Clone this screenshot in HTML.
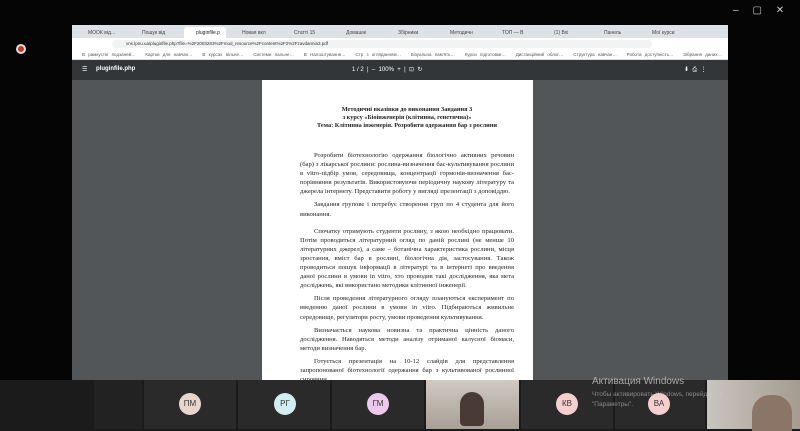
<!DOCTYPE html>
<html><head><meta charset="utf-8"><style>
*{margin:0;padding:0;box-sizing:border-box}
body{width:800px;height:431px;background:#050505;position:relative;overflow:hidden;font-family:"Liberation Sans",sans-serif}
.abs{position:absolute}
.tabs{left:72px;top:25px;width:656px;height:13px;background:#dee1e6}
.tab{position:absolute;top:2px;height:11px;font-size:5px;color:#444;padding:3px 0 0 12px;white-space:nowrap;overflow:hidden}
.addr{left:72px;top:38px;width:656px;height:12px;background:#fff}
.bm{left:72px;top:50px;width:656px;height:10px;background:#fff;border-bottom:1px solid #ddd;font-size:4.5px;color:#555;overflow:hidden}
.tool{left:72px;top:60px;width:656px;height:20px;background:#323639;color:#fff;font-size:6px}
.pdfbg{left:72px;top:80px;width:656px;height:300px;background:#525659}
.page{left:262px;top:80px;width:271px;height:300px;background:#fff;font-family:"Liberation Serif",serif;font-size:6.6px;color:#222;padding:0 19px 0 38px;line-height:9.1px;overflow:hidden}
.page p{text-align:justify;text-indent:14px;margin-bottom:4px}
.h{text-align:center;font-weight:bold;margin:26px 0 21px;line-height:8px;font-size:6.3px}
.strip{left:0;top:380px;width:800px;height:51px;background:#1b1b1b}
.tile{position:absolute;top:380px;height:49px;background:#2a2a2a}
.av{position:absolute;top:393px;width:22px;height:22px;border-radius:50%;font-size:8px;text-align:center;line-height:22px;color:#333}
</style></head><body>
<div class="abs" style="left:16px;top:44px;width:10px;height:10px;border-radius:50%;background:#c0392b;border:2px solid #ddd"></div>
<div class="abs" style="left:733px;top:5px;color:#ccc;font-size:10px;white-space:nowrap;width:70px">–&nbsp;&nbsp;&nbsp;&nbsp;&nbsp;▢&nbsp;&nbsp;&nbsp;&nbsp;&nbsp;✕</div>
<div class="abs tabs">
<div class="tab" style="left:4px;width:50px">МООК від…</div>
<div class="tab" style="left:58px;width:50px">Пошук від</div>
<div class="tab" style="left:112px;width:42px;background:#fff;border-radius:3px 3px 0 0;color:#222">pluginfile.p</div>
<div class="tab" style="left:158px;width:48px">Новая вкл</div>
<div class="tab" style="left:210px;width:48px">Статті 15</div>
<div class="tab" style="left:262px;width:48px">Домашні</div>
<div class="tab" style="left:314px;width:48px">Збірники</div>
<div class="tab" style="left:366px;width:48px">Методичн</div>
<div class="tab" style="left:418px;width:48px">ТОП — В</div>
<div class="tab" style="left:470px;width:48px">(1) Вхі</div>
<div class="tab" style="left:520px;width:48px">Панель</div>
<div class="tab" style="left:568px;width:40px">Мої курси</div>
</div>
<div class="abs addr"><div style="position:absolute;left:40px;top:2px;width:540px;height:8px;background:#f1f3f4;border-radius:4px;font-size:4.5px;color:#333;padding:1px 0 0 14px;white-space:nowrap">vns.lpnu.ua/pluginfile.php?file=%2F2003283%2Fmod_resource%2Fcontent%2F2%2Fzavdannia3.pdf</div></div>
<div class="abs bm"><div style="padding:2px 0 0 10px;white-space:nowrap;word-spacing:2px">В рамкустні подзаней… &nbsp; Картки для навчан… &nbsp; В курсах вільне… &nbsp; Системи пальне… &nbsp; В Налоштування… &nbsp; Стр з огляданням… &nbsp; Візуальна пам'ять… &nbsp; Курси підготовки… &nbsp; Дистанційний облог… &nbsp; Структура навчан… &nbsp; Робота доступність… &nbsp; Зібрання даних…</div></div>
<div class="abs tool"><span style="position:absolute;left:10px;top:6px">☰</span><span style="position:absolute;left:24px;top:6px;font-weight:bold">pluginfile.php</span><span style="position:absolute;left:280px;top:6px;white-space:nowrap">1 / 2 &nbsp;|&nbsp; – &nbsp;100% &nbsp;+ &nbsp;|&nbsp; ⊡ &nbsp;↻</span><span style="position:absolute;left:612px;top:6px;white-space:nowrap">⬇ &nbsp;⎙ &nbsp;⋮</span></div>
<div class="abs pdfbg"></div>
<div class="abs page">
<div class="h">Методичні вказівки до виконання Завдання 3<br>з курсу «Біоінженерія (клітинна, генетична)»<br>Тема: Клітинна інженерія. Розробити одержання бар з рослини</div>
<p>Розробити біотехнологію одержання біологічно активних речовин (бар) з лікарської рослини: рослина-визначення бас-культивування рослини в vitro-підбір умов, середовища, концентрації гормонів-визначення бас-порівняння результатів. Використовуючи періодичну наукову літературу та джерела інтернету. Представити роботу у вигляді презентації з доповіддю.</p>
<p style="margin-bottom:8px">Завдання групове і потребує створення груп по 4 студента для його виконання.</p>
<p>Спочатку отримують студенти рослину, з якою необхідно працювати. Потім проводиться літературний огляд по даній рослині (не менше 10 літературних джерел), а саме – ботанічна характеристика рослини, місця зростання, вміст бар в рослині, біологічна дія, застосування. Також проводиться пошук інформації в літературі та в інтернеті про введення даної рослини в умови in vitro, хто проводив такі дослідження, яка мета досліджень, які використано методики клітинної інженерії.</p>
<p>Після проведення літературного огляду плануються експеримент по введенню даної рослини в умови in vitro. Підбираються живильне середовище, регулятори росту, умови проведення культивування.</p>
<p>Визначається наукова новизна та практична цінність даного дослідження. Наводяться методи аналізу отриманої калусної біомаси, методи визначення бар.</p>
<p>Готується презентація на 10-12 слайдів для представлення запропонованої біотехнології одержання бар з культивованої рослинної сировини.</p>
<p>На платформу ВНС кожен студент скидає доповідь та презентацію.</p>
</div>
<div class="abs strip"></div>
<div class="tile" style="left:94px;width:48px;background:#222"></div>
<div class="tile" style="left:144px;width:92px"></div>
<div class="tile" style="left:238px;width:92px"></div>
<div class="tile" style="left:332px;width:92px"></div>
<div class="tile" style="left:426px;width:93px;background:linear-gradient(#cfcac2,#a89f95)"></div>
<div class="abs" style="left:460px;top:392px;width:24px;height:34px;border-radius:12px 12px 4px 4px;background:#4a3a35"></div>
<div class="tile" style="left:521px;width:92px"></div>
<div class="tile" style="left:615px;width:90px"></div>
<div class="tile" style="left:707px;width:93px;background:linear-gradient(90deg,#c9c5bf,#a59c90)"></div>
<div class="abs" style="left:752px;top:395px;width:40px;height:36px;border-radius:18px 18px 0 0;background:#8a7566"></div>
<div class="av" style="left:179px;background:#e8d6cc">ПМ</div>
<div class="av" style="left:274px;background:#d3eef0">РГ</div>
<div class="av" style="left:367px;background:#edc9ec">ГМ</div>
<div class="av" style="left:556px;background:#f6cfcf">КВ</div>
<div class="av" style="left:648px;background:#f6cfcf">ВА</div>
<div class="abs" style="left:592px;top:376px;color:rgba(220,220,220,.7);font-size:10px">Активация Windows</div>
<div class="abs" style="left:592px;top:390px;color:rgba(200,200,200,.6);font-size:6.5px;line-height:10px">Чтобы активировать Windows, перейдите в<br>"Параметры".</div>
</body></html>
